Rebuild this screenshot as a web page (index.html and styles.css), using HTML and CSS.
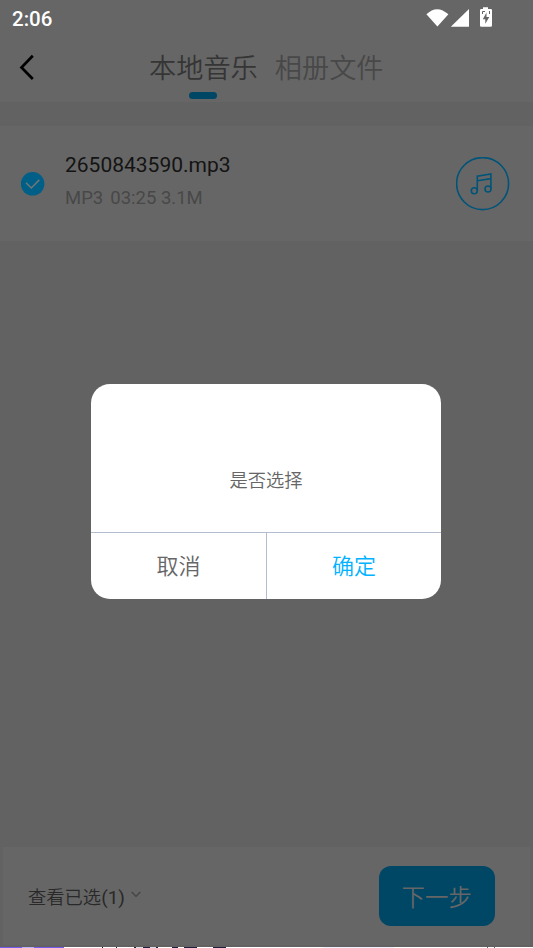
FILE: index.html
```html
<!DOCTYPE html>
<html lang="zh-CN">
<head>
<meta charset="utf-8">
<title>本地音乐</title>
<link rel="stylesheet" href="styles.css">
</head>
<body>
<div class="screen">
  <div class="status">
    <span class="time">2:06</span>
    <svg class="signals" width="68" height="22" viewBox="0 0 68 22">
      <path fill="#fff" d="M1 6.8Q11.500-4.200 23 6.800L12 20z" transform="translate(-.6 2) scale(1 .93)"/>
      <path fill="#fff" d="M24.800 20.800L43 3V20.800z"/>
      <path fill="#fff" d="M57 3V1.300h5V3h2.700q1.300 0 1.300 1.300v15.200q0 1.300-1.300 1.300H55.300Q54 20.800 54 19.500V4.300Q54 3 55.300 3z"/>
      <path fill="#666" d="M60.500 6.500L56.800 13.200H59.300V17.700L63.300 10.900H60.500z"/>
      <path stroke="#666" stroke-width="1" fill="none" d="M56.500 8V5.500h2.500M63.500 5v3"/>
    </svg>
  </div>
  <header class="top">
    <svg class="back" width="16" height="28" viewBox="0 0 16 28"><path d="M13.800 2.800L2.500 14.500L13.800 26" fill="none" stroke="#000" stroke-width="2.700"/></svg>
    <nav class="tabs">
      <span class="tab active">本地音乐</span>
      <span class="tab">相册文件</span>
    </nav>
  </header>
  <main class="list">
    <div class="row">
      <svg class="check" width="24" height="24" viewBox="0 0 24 24"><circle cx="11.600" cy="11.800" r="11.800" fill="#005f87"/><path d="M5 10.800L10.300 16L18.300 7.900" fill="none" stroke="#707678" stroke-width="1.500"/></svg>
      <div class="info">
        <div class="name">2650843590.mp3</div>
        <div class="meta"><span>MP3</span><span>03:25 3.1M</span></div>
      </div>
      <svg class="note" width="54" height="54" viewBox="0 0 54 54" fill="none" stroke="#005479" stroke-width="1.600"><circle cx="26.600" cy="26.600" r="26"/><path d="M21.300 33.500V19.200L34.900 17V31.500M21.300 23.800L34.900 21.600"/><circle cx="18.300" cy="33.700" r="3"/><circle cx="32" cy="32" r="3"/></svg>
    </div>
  </main>
  <footer class="bottom">
    <div class="panel">
      <span class="selected">查看已选<span class="count">(1)</span></span>
      <svg class="chevron" width="10" height="7" viewBox="0 0 10 7"><path d="M.7 1L5 5.500L9.300 1" fill="none" stroke="#434343" stroke-width="1.200"/></svg>
      <span class="next">下一步</span>
    </div>
    <div class="edge"></div>
  </footer>
  <div class="overlay">
    <div class="dialog">
      <div class="message">是否选择</div>
      <div class="actions"><span class="cancel">取消</span><span class="confirm">确定</span></div>
    </div>
  </div>
</div>
</body>
</html>
```

FILE: styles.css
```css
* { box-sizing: border-box; }
body { margin: 0; font-family: Roboto, "Noto Sans CJK SC", sans-serif; }
.screen {
  position: relative;
  display: flex;
  flex-direction: column;
  height: 948px;
  background: #626262;
  overflow: hidden;
  white-space: nowrap;
}
.status {
  display: flex;
  justify-content: space-between;
  height: 36px;
  padding: 6px 39px 0 12px;
  background: #666;
}
.time { font-size: 20.500px; line-height: 26px; font-weight: 500; color: #fff; }
.signals { display: block; }
.top {
  display: flex;
  height: 66px;
  padding-left: 19px;
  background: #666;
}
.back { margin-top: 17px; }
.tabs { display: flex; gap: 17px; margin-left: 114px; }
.tab { height: 64px; font-size: 27.200px; line-height: 66px; font-weight: 350; color: #484848; }
.active { color: #353535; }
.active::after {
  content: "";
  display: block;
  width: 28px;
  height: 7px;
  margin: -10px auto 0;
  border-radius: 3.500px;
  background: #004766;
}
.list { flex: 1; padding-top: 24px; }
.row {
  display: flex;
  align-items: center;
  height: 115px;
  padding: 0 23px 0 21px;
  background: #666;
}
.info { flex: 1; margin-left: 20px; padding-bottom: 4px; }
.name { font-size: 21px; line-height: 33px; color: #141414; }
.meta { display: flex; gap: 7px; font-size: 18.500px; line-height: 33px; color: #484848; }
.bottom { height: 102px; }
.panel {
  display: flex;
  align-items: center;
  height: 98px;
  margin: 1px 3px 2px;
  padding: 0 35.500px 0 25px;
  background: #666;
}
.selected { font-size: 18.300px; font-weight: 350; color: #292929; }
.count { font-size: 19px; font-weight: 400; }
.chevron { margin: -4px 0 0 6px; }
.next {
  width: 115.500px;
  height: 60px;
  margin-left: auto;
  border-radius: 12px;
  background: #004766;
  color: #666;
  font-size: 23.500px;
  font-weight: 350;
  line-height: 64px;
  text-align: center;
}
.edge {
  height: 1px;
  background: linear-gradient(90deg, #7558ef 0 22px, #b9afff 22px 34px, #7558ef 34px 64px, #fff 64px 102px, #111 102px 103px, #fff 103px 116px, #222 116px 117px, #fff 117px 134px, #281b42 134px 136px, #ddd 136px 143px, #281b42 143px 150px, #ddd 150px 156px, #281b42 156px 158px, #fff 158px 172px, #281b42 172px 178px, #fff 178px 184px, #281b42 184px 197px, #fff 197px 213px, #281b42 213px 226px, #fff 226px 323px, #f2efff 323px 394px, #fff 394px 487px, #666 487px 488px, #fff 488px 494px, #666 494px 495px, #fff 495px);
}
.overlay { position: absolute; inset: 0; padding: 384px 92px 0 91px; }
.dialog {
  display: flex;
  flex-direction: column;
  height: 214.500px;
  border-radius: 19px;
  background: #fff;
  overflow: hidden;
}
.message {
  height: 148px;
  flex: none;
  padding-top: 83px;
  font-size: 18.300px;
  font-weight: 350;
  line-height: 27px;
  text-align: center;
  color: #666;
}
.actions {
  display: flex;
  flex: 1;
  border-top: 1px solid #b4bdd0;
  font-size: 22px;
  font-weight: 350;
  line-height: 68px;
  text-align: center;
}
.cancel { width: 176px; border-right: 1px solid #b4bdd0; color: #666; }
.confirm { flex: 1; color: #00b2ff; }
```
